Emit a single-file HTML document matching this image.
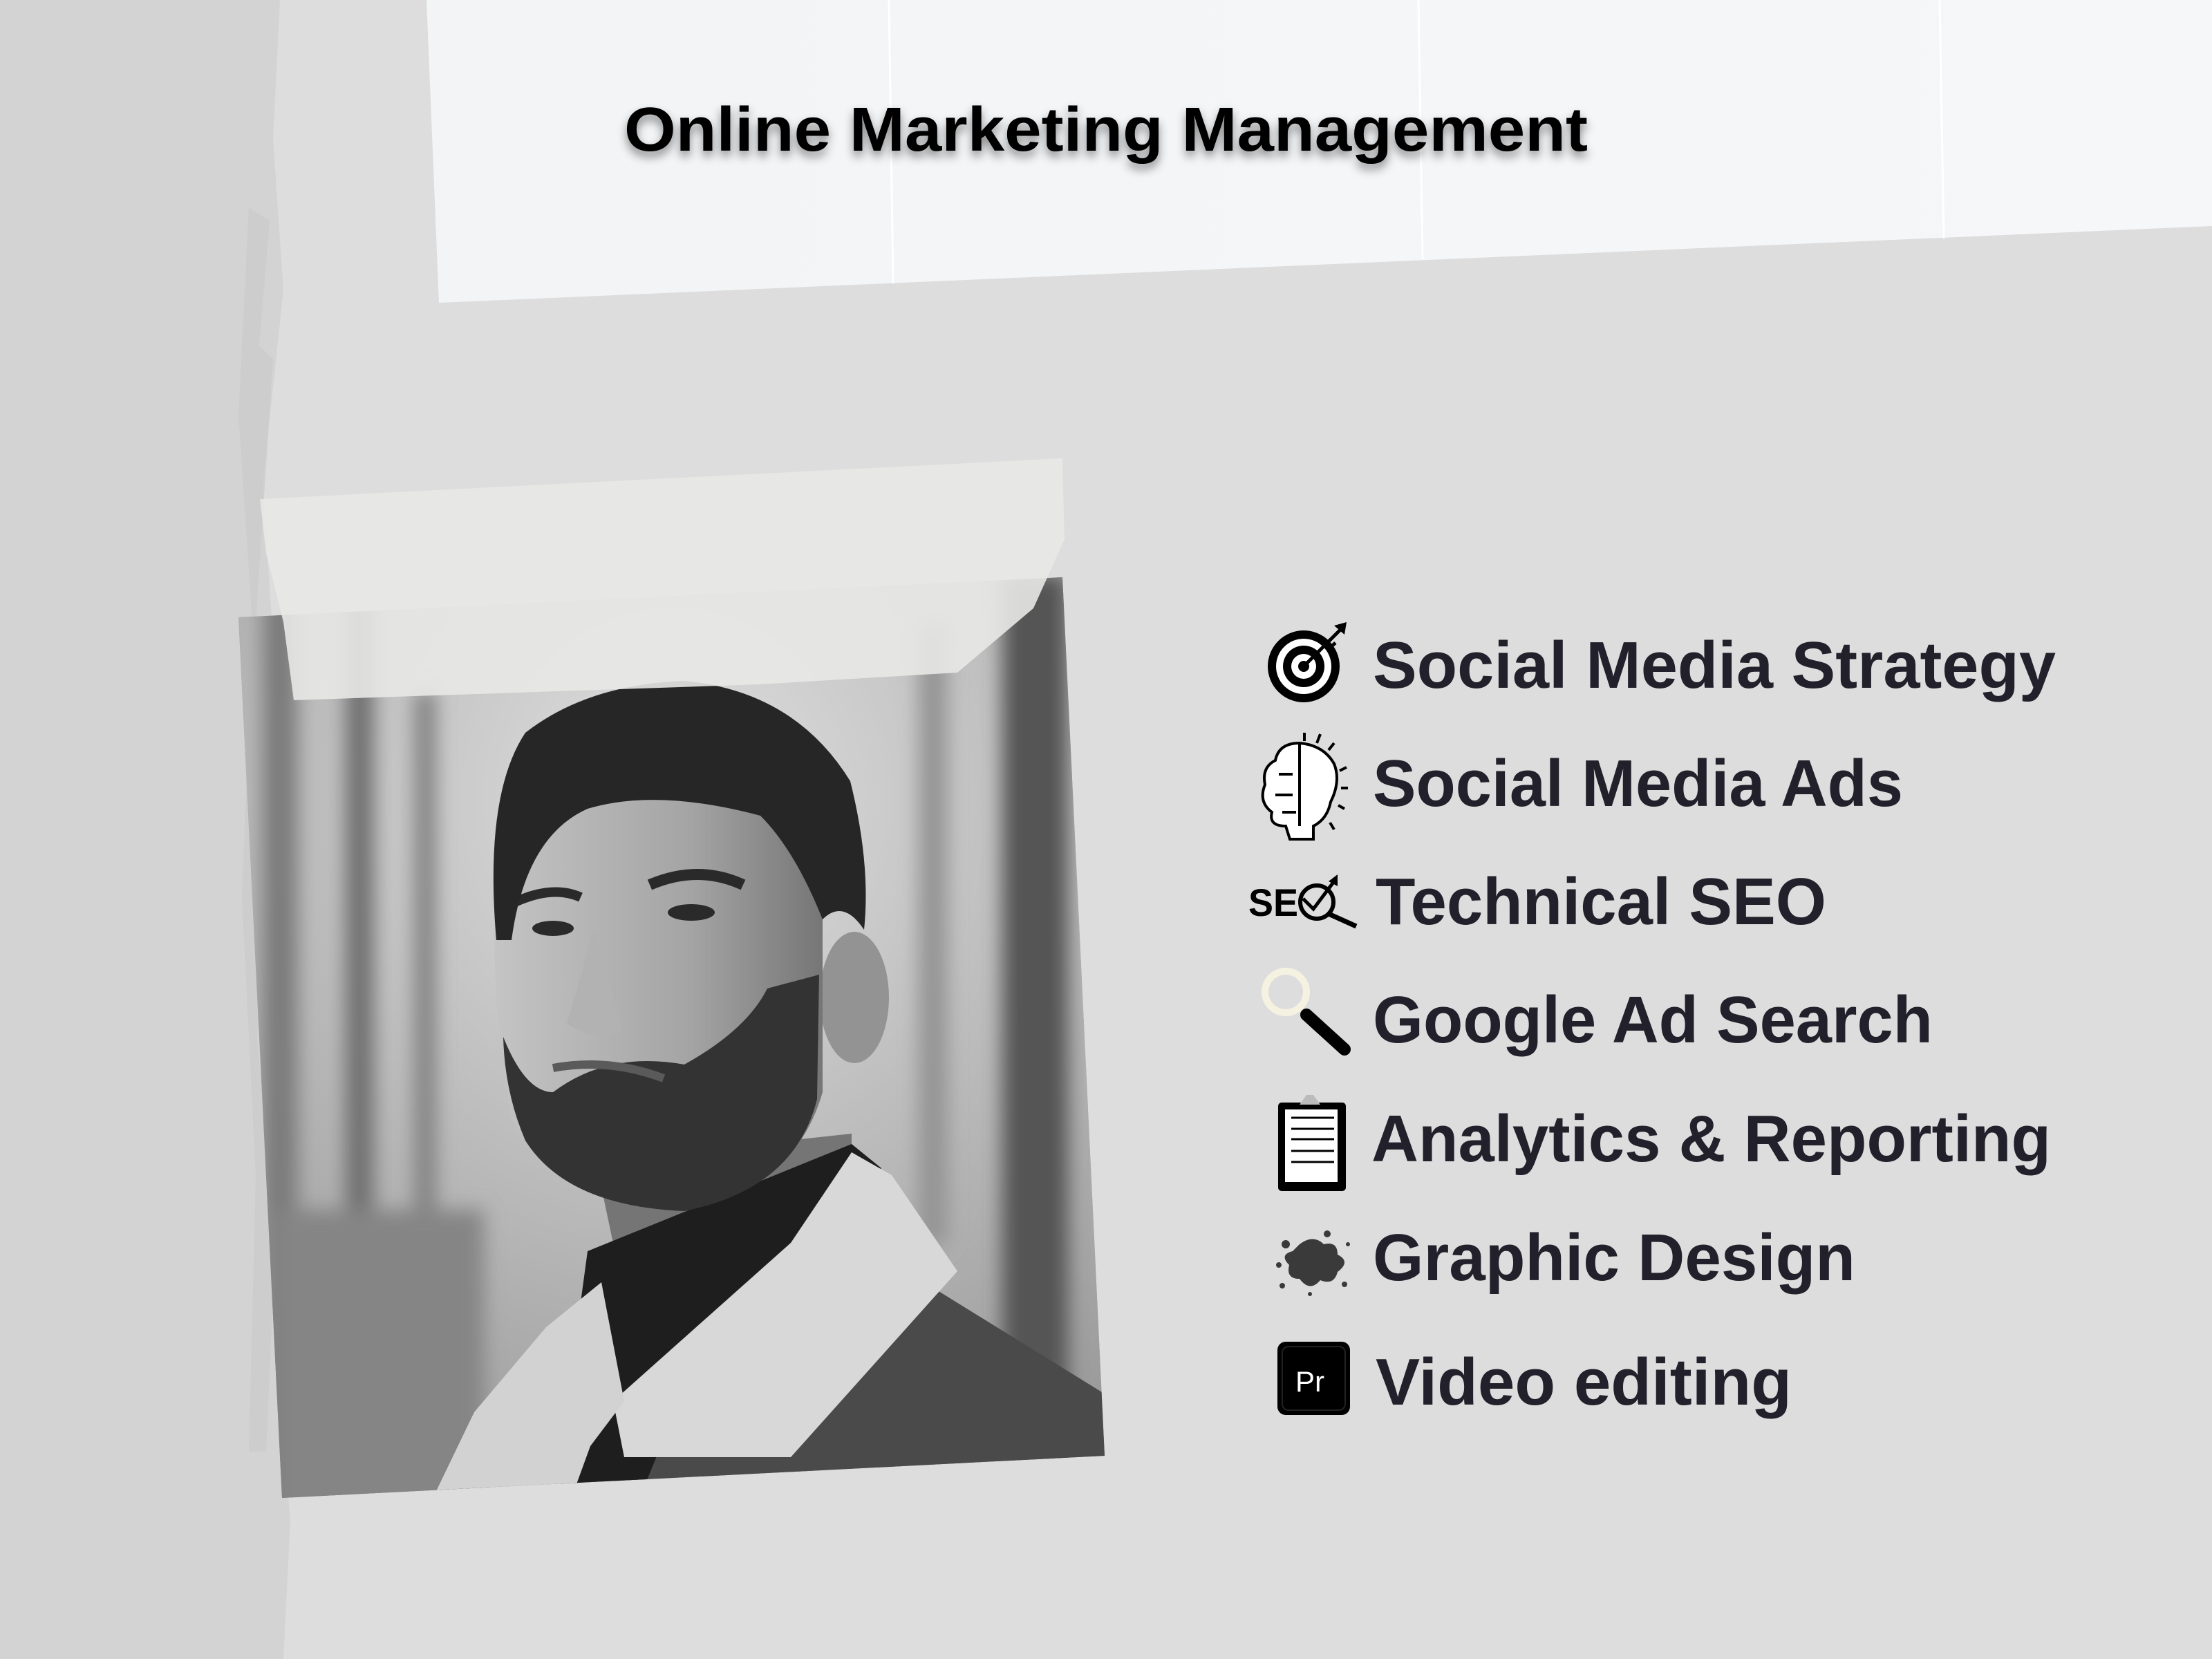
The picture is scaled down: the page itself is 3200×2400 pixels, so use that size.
<!DOCTYPE html>
<html><head><meta charset="utf-8"><style>
html,body{margin:0;padding:0;background:#dddddd;}
svg{display:block}
</style></head><body>
<svg width="3200" height="2400" viewBox="0 0 3200 2400" xmlns="http://www.w3.org/2000/svg">
<defs>
<filter id="sh" x="-5%" y="-30%" width="110%" height="180%"><feDropShadow dx="0" dy="8" stdDeviation="7" flood-color="#000" flood-opacity="0.45"/></filter>
<filter id="blur6"><feGaussianBlur stdDeviation="14"/></filter>
<filter id="blur3"><feGaussianBlur stdDeviation="4"/></filter>
<clipPath id="ph"><polygon points="345,893 1537,835 1598,2106 408,2167"/></clipPath>
<radialGradient id="sky" cx="0.5" cy="0.25" r="0.75"><stop offset="0" stop-color="#e0e0e0"/><stop offset="1" stop-color="#9c9c9c"/></radialGradient>
<linearGradient id="face" x1="0" y1="0" x2="1" y2="0"><stop offset="0" stop-color="#c4c4c4"/><stop offset="0.6" stop-color="#a4a4a4"/><stop offset="1" stop-color="#767676"/></linearGradient>
<linearGradient id="paper" x1="0" y1="0" x2="1" y2="0"><stop offset="0" stop-color="#f2f4f6"/><stop offset="1" stop-color="#f6f7f9"/></linearGradient>
</defs>
<rect width="3200" height="2400" fill="#dddddd"/>
<!-- left strip -->
<path d="M0,0 L405,0 L395,200 L410,420 L380,700 L400,1000 L385,1300 L410,1600 L395,1900 L420,2200 L410,2400 L0,2400 Z" fill="#d3d3d3"/>
<path d="M360,300 L390,320 L375,500 L395,520 L370,900 L392,1200 L372,1500 L398,1800 L385,2100 L360,2100 L370,1700 L350,1300 L365,900 L345,600 Z" fill="#cacaca" opacity="0.7"/>
<!-- paper -->
<polygon points="617,0 3200,0 3200,327 635,438" fill="url(#paper)"/>
<line x1="1286" y1="0" x2="1292" y2="410" stroke="#ffffff" stroke-width="3"/>
<line x1="2052" y1="0" x2="2058" y2="375" stroke="#ffffff" stroke-width="3"/>
<line x1="2806" y1="0" x2="2812" y2="345" stroke="#ffffff" stroke-width="3"/>
<text x="903" y="218" font-family="Liberation Sans, sans-serif" font-weight="bold" font-size="90" fill="#000" textLength="1394" lengthAdjust="spacingAndGlyphs" filter="url(#sh)">Online Marketing Management</text>
<!-- photo -->
<polygon points="345,893 1537,835 1598,2106 408,2167" fill="#999"/>
<g clip-path="url(#ph)">
<rect x="300" y="800" width="1350" height="1420" fill="url(#sky)"/>
<g filter="url(#blur6)">
<rect x="380" y="850" width="50" height="1350" fill="#7a7a7a"/>
<rect x="500" y="850" width="40" height="1350" fill="#6e6e6e"/>
<rect x="600" y="1000" width="30" height="1200" fill="#808080"/>
<rect x="1450" y="830" width="95" height="1350" fill="#555"/>
<rect x="1330" y="900" width="40" height="900" fill="#939393"/>
<rect x="400" y="1750" width="300" height="450" fill="#858585"/>
</g>
<!-- jacket -->
<polygon points="1337,1855 1620,2030 1620,2200 880,2200 1000,1950" fill="#4a4a4a"/>
<polygon points="629,2173 686,2043 720,2200" fill="#3a3a3a"/>
<!-- neck -->
<polygon points="862,1680 1232,1640 1232,1830 900,1860" fill="#757575"/>
<!-- turtleneck -->
<polygon points="850,1810 1232,1655 1275,1690 1010,1960 920,2180 800,2180" fill="#1e1e1e"/>
<!-- collars -->
<polygon points="1232,1667 1290,1700 1385,1839 1144,2108 903,2108 887,2027 1144,1798" fill="#d8d8d8"/>
<polygon points="870,1855 903,2027 854,2092 822,2180 620,2180 686,2043 790,1920" fill="#d2d2d2"/>
<!-- ear -->
<ellipse cx="1236" cy="1443" rx="50" ry="95" fill="#939393"/>
<!-- face -->
<path d="M720,1220 Q760,1150 900,1140 Q1100,1130 1190,1250 L1190,1580 Q1150,1720 990,1750 Q820,1740 740,1620 Q705,1450 720,1220 Z" fill="url(#face)"/>
<!-- beard -->
<path d="M728,1500 Q760,1580 800,1580 Q880,1520 990,1540 Q1080,1490 1110,1430 L1185,1410 L1182,1590 Q1150,1720 990,1752 Q820,1745 760,1650 Q730,1580 728,1500 Z" fill="#333"/>
<path d="M800,1545 Q880,1530 960,1560" stroke="#5a5a5a" stroke-width="12" fill="none"/>
<!-- nose -->
<path d="M860,1340 Q830,1450 820,1480 Q860,1510 900,1490" fill="#b2b2b2"/>
<!-- eyes -->
<ellipse cx="800" cy="1343" rx="30" ry="11" fill="#2a2a2a"/>
<ellipse cx="1000" cy="1320" rx="34" ry="12" fill="#2a2a2a"/>
<path d="M745,1305 Q800,1280 840,1298" stroke="#2a2a2a" stroke-width="14" fill="none"/>
<path d="M940,1280 Q1010,1250 1075,1280" stroke="#2a2a2a" stroke-width="16" fill="none"/>
<!-- hair -->
<path d="M718,1360 Q700,1150 760,1060 Q850,990 990,985 Q1150,1000 1230,1130 Q1260,1250 1250,1345 Q1220,1300 1190,1330 Q1150,1230 1100,1180 Q950,1140 850,1170 Q760,1210 740,1360 Z" fill="#262626"/>
</g>
<!-- tape -->
<polygon points="376,722 1537,663 1540,780 1495,880 1385,973 1100,990 425,1013 410,900 385,800" fill="#e8e8e5" opacity="0.9"/>
<!-- list text -->
<g font-family="Liberation Sans, sans-serif" font-weight="bold" font-size="96" fill="#22212b">
<text x="1986" y="995" textLength="988" lengthAdjust="spacingAndGlyphs">Social Media Strategy</text>
<text x="1986" y="1166" textLength="767" lengthAdjust="spacingAndGlyphs">Social Media Ads</text>
<text x="1990" y="1337" textLength="652" lengthAdjust="spacingAndGlyphs">Technical SEO</text>
<text x="1986" y="1508" textLength="810" lengthAdjust="spacingAndGlyphs">Google Ad Search</text>
<text x="1984" y="1680" textLength="983" lengthAdjust="spacingAndGlyphs">Analytics &amp; Reporting</text>
<text x="1986" y="1852" textLength="698" lengthAdjust="spacingAndGlyphs">Graphic Design</text>
<text x="1990" y="2032" textLength="602" lengthAdjust="spacingAndGlyphs">Video editing</text>
</g>
<!-- icon: target -->
<g>
<circle cx="1886" cy="964" r="52" fill="#000"/>
<circle cx="1886" cy="964" r="40" fill="#fff"/>
<circle cx="1886" cy="964" r="30" fill="#000"/>
<circle cx="1886" cy="964" r="18" fill="#fff"/>
<circle cx="1886" cy="964" r="8" fill="#000"/>
<line x1="1886" y1="964" x2="1940" y2="910" stroke="#000" stroke-width="5"/>
<path d="M1930,905 L1948,900 L1945,918 Z" fill="#000"/>
<path d="M1915,935 L1925,925 M1920,940 L1932,930" stroke="#000" stroke-width="5"/>
</g>
<!-- icon: brain bulb -->
<g stroke="#000" stroke-width="4" fill="#fff">
<path d="M1880,1075 Q1850,1075 1845,1100 Q1825,1110 1830,1135 Q1820,1160 1840,1175 Q1835,1195 1860,1195 L1866,1214 L1900,1214 L1900,1195 Q1920,1185 1925,1160 Q1940,1130 1930,1105 Q1915,1078 1880,1075 Z"/>
<line x1="1880" y1="1075" x2="1880" y2="1195"/>
<path d="M1850,1120 L1870,1120 M1845,1150 L1870,1150 M1855,1175 L1875,1175" fill="none"/>
<path d="M1887,1060 L1887,1072 M1910,1062 L1905,1075 M1930,1075 L1922,1085 M1948,1110 L1938,1115 M1950,1140 L1940,1140 M1945,1170 L1936,1165 M1930,1200 L1924,1190" fill="none"/>
</g>
<!-- icon: SEO -->
<g>
<text x="1806" y="1325" font-family="Liberation Sans, sans-serif" font-weight="bold" font-size="56" fill="#000" textLength="72" lengthAdjust="spacingAndGlyphs">SE</text>
<circle cx="1905" cy="1305" r="24" fill="none" stroke="#000" stroke-width="6"/>
<line x1="1922" y1="1322" x2="1962" y2="1340" stroke="#000" stroke-width="7"/>
<path d="M1885,1300 L1900,1315 L1930,1275" stroke="#000" stroke-width="5" fill="none"/>
<path d="M1922,1275 L1935,1265 L1935,1282 Z" fill="#000"/>
</g>
<!-- icon: magnifier -->
<g>
<circle cx="1860" cy="1435" r="30" fill="none" stroke="#f5f2e2" stroke-width="10"/>
<line x1="1890" y1="1468" x2="1945" y2="1518" stroke="#000" stroke-width="18" stroke-linecap="round"/>
</g>
<!-- icon: clipboard -->
<g>
<rect x="1849" y="1595" width="98" height="128" rx="5" fill="#000"/>
<rect x="1859" y="1605" width="76" height="105" fill="#fff"/>
<path d="M1880,1598 L1890,1584 L1900,1584 L1910,1598 Z" fill="#bbb"/>
<g stroke="#000" stroke-width="3"><line x1="1868" y1="1617" x2="1930" y2="1617"/><line x1="1868" y1="1633" x2="1930" y2="1633"/><line x1="1868" y1="1648" x2="1930" y2="1648"/><line x1="1868" y1="1665" x2="1930" y2="1665"/><line x1="1868" y1="1681" x2="1930" y2="1681"/></g>
</g>
<!-- icon: splat -->
<g fill="#3a3a3a">
<path d="M1880,1800 Q1900,1785 1915,1800 Q1935,1795 1935,1815 Q1955,1825 1935,1840 Q1930,1860 1910,1852 Q1895,1870 1880,1850 Q1860,1850 1865,1830 Q1850,1815 1870,1810 Z"/>
<circle cx="1860" cy="1800" r="6"/><circle cx="1920" cy="1785" r="5"/><circle cx="1950" cy="1800" r="3"/>
<circle cx="1855" cy="1860" r="4"/><circle cx="1895" cy="1872" r="3"/><circle cx="1945" cy="1858" r="4"/><circle cx="1850" cy="1830" r="4"/>
</g>
<!-- icon: Pr -->
<g>
<rect x="1848" y="1941" width="105" height="106" rx="12" fill="#000"/>
<rect x="1855" y="1948" width="91" height="92" rx="9" fill="none" stroke="#222" stroke-width="2"/>
<text x="1874" y="2013" font-family="Liberation Sans, sans-serif" font-size="42" fill="#fff">Pr</text>
</g>
</svg>
</body></html>
